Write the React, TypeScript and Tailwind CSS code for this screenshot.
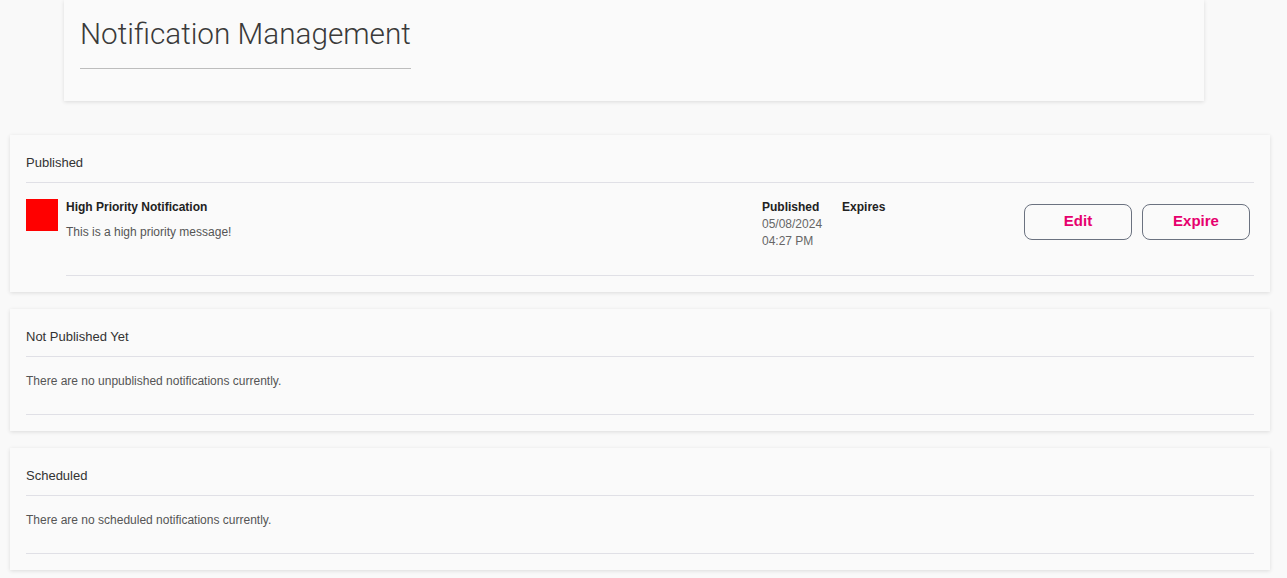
import React from 'react';

const sans = "font-['Liberation_Sans',Arial,sans-serif]";

const Section = ({ title, children }: { title: string; children: React.ReactNode }) => (
  <div className="bg-[#fafafa] shadow-[0_1px_4px_rgba(0,0,0,0.12)] px-4 pt-5 pb-4">
    <h2 className="text-[13px] leading-4 text-[#333] mb-[11px]">{title}</h2>
    <div className="border-t border-[#e0e0e6]">{children}</div>
  </div>
);

const Empty = ({ text }: { text: string }) => (
  <p className="pt-4 pb-[25px] text-xs leading-4 text-[#555] border-b border-[#e0e0e6]">{text}</p>
);

const App = () => {
  return (
    <div className={`min-h-[578px] bg-[#f9f9f9] ${sans}`}>
      {/* header */}
      <div className="w-[1140px] ml-16 mb-[34px] bg-[#fafafa] shadow-[0_1px_4px_rgba(0,0,0,0.12)] px-4 pt-3 pb-8">
        <h1 className="inline-block font-['Roboto',sans-serif] font-light text-[29.7px] text-[#3a3a3a] pb-[11px] border-b border-[#bdbdbd]">
          Notification Management
        </h1>
      </div>

      <div className="w-[1260px] ml-[10px] flex flex-col gap-[17px]">
        <Section title="Published">
          <div className="pt-4 flex">
            <div className="w-8 h-8 bg-[#ff0000] mr-2 shrink-0" />
            <div className="flex-1 flex h-[77px] border-b border-[#e0e0e6]">
              <div className="flex-1">
                <div className="text-xs leading-4 font-bold text-[#222]">High Priority Notification</div>
                <div className="mt-[9px] text-xs leading-4 text-[#555]">This is a high priority message!</div>
              </div>
              <div className="w-[262px] flex gap-5 text-xs">
                <div>
                  <div className="leading-4 font-bold text-[#222]">Published</div>
                  <div className="leading-[18px] text-[#666]">05/08/2024</div>
                  <div className="leading-[17px] text-[#666]">04:27 PM</div>
                </div>
                <div className="leading-4 font-bold text-[#222]">Expires</div>
              </div>
              <div className="flex gap-[10px] pr-1 pt-[5px]">
                <button className="w-[108px] h-9 border border-[#6b7280] rounded-lg text-[15px] font-bold text-[#e6006e]">
                  Edit
                </button>
                <button className="w-[108px] h-9 border border-[#6b7280] rounded-lg text-[15px] font-bold text-[#e6006e]">
                  Expire
                </button>
              </div>
            </div>
          </div>
        </Section>

        <Section title="Not Published Yet">
          <Empty text="There are no unpublished notifications currently." />
        </Section>

        <Section title="Scheduled">
          <Empty text="There are no scheduled notifications currently." />
        </Section>
      </div>
    </div>
  );
};

export default App;
